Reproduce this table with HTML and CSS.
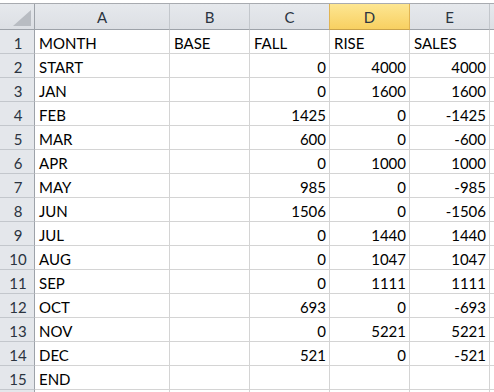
FILE: index.html
```html
<!DOCTYPE html>
<html lang="en">

<head>
    <meta charset="UTF-8">
    <title>Sheet1</title>
    <link rel="stylesheet" href="styles.css">
</head>

<body>
    <div class="top-strip"></div>
    <div class="sheet">
        <div class="row head-row">
            <div class="cell corner"><span class="corner-tri"></span></div>
            <div class="cell col-head">A</div>
            <div class="cell col-head">B</div>
            <div class="cell col-head">C</div>
            <div class="cell col-head active">D</div>
            <div class="cell col-head">E</div>
            <div class="cell col-head last"></div>
        </div>

        <div class="row">
            <div class="cell row-head">1</div>
            <div class="cell">MONTH</div>
            <div class="cell">BASE</div>
            <div class="cell">FALL</div>
            <div class="cell">RISE</div>
            <div class="cell">SALES</div>
            <div class="cell"></div>
        </div>
        <div class="row">
            <div class="cell row-head">2</div>
            <div class="cell">START</div>
            <div class="cell"></div>
            <div class="cell num">0</div>
            <div class="cell num">4000</div>
            <div class="cell num">4000</div>
            <div class="cell"></div>
        </div>
        <div class="row">
            <div class="cell row-head">3</div>
            <div class="cell">JAN</div>
            <div class="cell"></div>
            <div class="cell num">0</div>
            <div class="cell num">1600</div>
            <div class="cell num">1600</div>
            <div class="cell"></div>
        </div>
        <div class="row">
            <div class="cell row-head">4</div>
            <div class="cell">FEB</div>
            <div class="cell"></div>
            <div class="cell num">1425</div>
            <div class="cell num">0</div>
            <div class="cell num">-1425</div>
            <div class="cell"></div>
        </div>
        <div class="row">
            <div class="cell row-head">5</div>
            <div class="cell">MAR</div>
            <div class="cell"></div>
            <div class="cell num">600</div>
            <div class="cell num">0</div>
            <div class="cell num">-600</div>
            <div class="cell"></div>
        </div>
        <div class="row">
            <div class="cell row-head">6</div>
            <div class="cell">APR</div>
            <div class="cell"></div>
            <div class="cell num">0</div>
            <div class="cell num">1000</div>
            <div class="cell num">1000</div>
            <div class="cell"></div>
        </div>
        <div class="row">
            <div class="cell row-head">7</div>
            <div class="cell">MAY</div>
            <div class="cell"></div>
            <div class="cell num">985</div>
            <div class="cell num">0</div>
            <div class="cell num">-985</div>
            <div class="cell"></div>
        </div>
        <div class="row">
            <div class="cell row-head">8</div>
            <div class="cell">JUN</div>
            <div class="cell"></div>
            <div class="cell num">1506</div>
            <div class="cell num">0</div>
            <div class="cell num">-1506</div>
            <div class="cell"></div>
        </div>
        <div class="row">
            <div class="cell row-head">9</div>
            <div class="cell">JUL</div>
            <div class="cell"></div>
            <div class="cell num">0</div>
            <div class="cell num">1440</div>
            <div class="cell num">1440</div>
            <div class="cell"></div>
        </div>
        <div class="row">
            <div class="cell row-head">10</div>
            <div class="cell">AUG</div>
            <div class="cell"></div>
            <div class="cell num">0</div>
            <div class="cell num">1047</div>
            <div class="cell num">1047</div>
            <div class="cell"></div>
        </div>
        <div class="row">
            <div class="cell row-head">11</div>
            <div class="cell">SEP</div>
            <div class="cell"></div>
            <div class="cell num">0</div>
            <div class="cell num">1111</div>
            <div class="cell num">1111</div>
            <div class="cell"></div>
        </div>
        <div class="row">
            <div class="cell row-head">12</div>
            <div class="cell">OCT</div>
            <div class="cell"></div>
            <div class="cell num">693</div>
            <div class="cell num">0</div>
            <div class="cell num">-693</div>
            <div class="cell"></div>
        </div>
        <div class="row">
            <div class="cell row-head">13</div>
            <div class="cell">NOV</div>
            <div class="cell"></div>
            <div class="cell num">0</div>
            <div class="cell num">5221</div>
            <div class="cell num">5221</div>
            <div class="cell"></div>
        </div>
        <div class="row">
            <div class="cell row-head">14</div>
            <div class="cell">DEC</div>
            <div class="cell"></div>
            <div class="cell num">521</div>
            <div class="cell num">0</div>
            <div class="cell num">-521</div>
            <div class="cell"></div>
        </div>
        <div class="row">
            <div class="cell row-head">15</div>
            <div class="cell">END</div>
            <div class="cell"></div>
            <div class="cell"></div>
            <div class="cell"></div>
            <div class="cell"></div>
            <div class="cell"></div>
        </div>
        <div class="row stub">
            <div class="cell row-head"></div>
            <div class="cell"></div>
            <div class="cell"></div>
            <div class="cell"></div>
            <div class="cell"></div>
            <div class="cell"></div>
            <div class="cell"></div>
        </div>
    </div>
</body>

</html>
```

FILE: styles.css
```css
body {
    margin: 0;
    padding: 0;
    background-color: #ffffff;
    font-family: Lato, "Liberation Sans", sans-serif;
    font-size: 15px;
    color: #000000;
    overflow: hidden;
}

.top-strip {
    height: 2px;
    border-bottom: 1px solid #a8abb0;
    border-top: 1px solid #ffffff;
    background-color: #ffffff;
}

.sheet {
    width: 100%;
}

.row {
    display: grid;
    grid-template-columns: 35px 135px 80px 80px 80px 80px 1fr;
    height: 24px;
}

.row.stub {
    height: 2px;
}

.stub .cell {
    border-bottom: none;
}

.cell {
    box-sizing: border-box;
    border-right: 1px solid #d4d4d4;
    border-bottom: 1px solid #d4d4d4;
    padding: 3px 3px 0 4px;
    line-height: 20px;
    white-space: nowrap;
    overflow: hidden;
}

.num {
    text-align: right;
}

.head-row {
    height: 26px;
}

.col-head {
    background: linear-gradient(#e6e9ed, #dcdfe4);
    border-right: 1px solid #c3c7cc;
    border-bottom: 1px solid #9da2a9;
    text-align: center;
    color: #2b3440;
    padding: 3px 0 0 0;
}

.col-head.active {
    background: linear-gradient(#fde692, #f8d061);
    border-left: 1px solid #e1b452;
    border-right: 1px solid #e1b452;
    border-bottom: 1px solid #c9a24a;
    margin-left: -1px;
}

.col-head.last {
    border-right: none;
}

.corner {
    position: relative;
    background: linear-gradient(#e6e9ed, #dcdfe4);
    border-right: 1px solid #9da2a9;
    border-bottom: 1px solid #9da2a9;
}

.corner-tri {
    position: absolute;
    right: 3px;
    bottom: 3px;
    width: 0;
    height: 0;
    border-left: 18px solid transparent;
    border-bottom: 16px solid #b8bcc2;
}

.row-head {
    background-color: #e4e7eb;
    border-right: 1px solid #9da2a9;
    border-bottom: 1px solid #c3c7cc;
    text-align: center;
    padding: 3px 0 0 2px;
    color: #2b3440;
}
```
